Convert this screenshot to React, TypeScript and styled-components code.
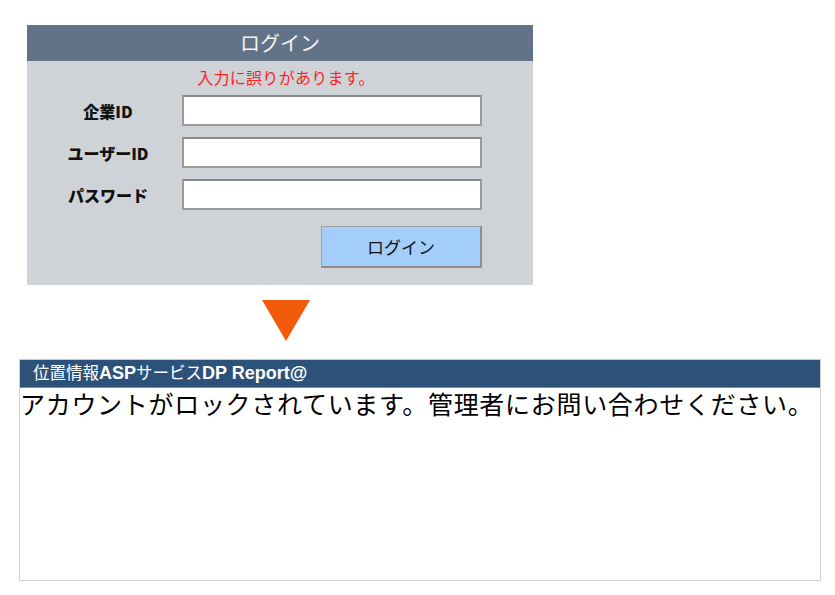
import styled, { createGlobalStyle } from "styled-components";

const GlobalStyle = createGlobalStyle`
    body {
        margin: 0;
        background: #ffffff;
        font-family: "Noto Sans CJK JP", sans-serif;
    }
`;

const StyledPage = styled.div`
    display: flex;
    flex-direction: column;
    align-items: flex-start;
    width: 835px;
    height: 595px;
    overflow: hidden;
`;

const StyledLoginPanel = styled.section`
    margin: 25px 0 0 27px;
    width: 506px;
    height: 260px;
    background: #cfd2d6;
    display: flex;
    flex-direction: column;
`;

const StyledLoginHeader = styled.h1`
    margin: 0;
    height: 36px;
    background: #627388;
    color: #f4f4f4;
    font-size: 20px;
    font-weight: 400;
    line-height: 36px;
    text-align: center;
`;

const StyledError = styled.p`
    margin: 5px 0 7px;
    padding-left: 12px;
    height: 22px;
    line-height: 22px;
    text-align: center;
    color: #ff1f1f;
    font-size: 16px;
    letter-spacing: 0.3px;
`;

const StyledForm = styled.div`
    display: grid;
    grid-template-columns: 106px 300px;
    column-gap: 21px;
    row-gap: 11px;
    padding-left: 28px;
    align-items: center;
`;

const StyledLabel = styled.label`
    text-align: center;
    font-size: 16px;
    font-weight: 900;
    color: #111;
`;

const StyledInput = styled.input`
    box-sizing: border-box;
    width: 300px;
    height: 31px;
    border: 2px solid #9a9a9a;
    border-top-color: #8a8a8a;
    background: #ffffff;
    padding: 0 6px;
    margin: 0;
`;

const StyledButton = styled.button`
    grid-column: 2;
    justify-self: end;
    margin-top: 5px;
    box-sizing: border-box;
    width: 161px;
    height: 42px;
    background: #a3cdfb;
    border: 1px solid #a0a0a0;
    border-right: 2px solid #8e8e8e;
    border-bottom: 2px solid #8e8e8e;
    font-family: "Noto Sans CJK JP", sans-serif;
    font-size: 17px;
    color: #111;
    cursor: pointer;
`;

const StyledArrow = styled.div`
    margin: 15px 0 0 262px;
    width: 0;
    height: 0;
    border-left: 24px solid transparent;
    border-right: 24px solid transparent;
    border-top: 41px solid #f05a0a;
`;

const StyledResultPanel = styled.section`
    margin: 18px 0 0 19px;
    box-sizing: border-box;
    width: 802px;
    height: 222px;
    border: 1px solid #cfcfcf;
    border-top-color: #c8c8c8;
`;

const StyledResultHeader = styled.div`
    height: 28px;
    line-height: 26px;
    background: #2d5279;
    color: #ffffff;
    padding-left: 13px;
    font-family: "Liberation Sans", "Noto Sans CJK JP", sans-serif;
    font-size: 16.5px;
    border-bottom: 1px solid #6f8fb0;
    box-sizing: border-box;
    white-space: nowrap;
`;

const StyledStrong = styled.b`
    font-weight: 700;
    font-size: 18px;
`;

const StyledMessage = styled.p`
    margin: 0;
    font-size: 25px;
    line-height: 30px;
    letter-spacing: 0.7px;
    color: #000;
    white-space: nowrap;
`;

const fields = ["企業ID", "ユーザーID", "パスワード"];

export default function App() {
    return (
        <StyledPage>
            <GlobalStyle />
            <StyledLoginPanel>
                <StyledLoginHeader>ログイン</StyledLoginHeader>
                <StyledError>入力に誤りがあります。</StyledError>
                <StyledForm>
                    {fields.map((f) => (
                        <>
                            <StyledLabel key={f + "l"}>{f}</StyledLabel>
                            <StyledInput key={f + "i"} type={f === "パスワード" ? "password" : "text"} />
                        </>
                    ))}
                    <StyledButton>ログイン</StyledButton>
                </StyledForm>
            </StyledLoginPanel>

            <StyledArrow />

            <StyledResultPanel>
                <StyledResultHeader>
                    位置情報<StyledStrong>ASP</StyledStrong>サービス<StyledStrong>DP Report@</StyledStrong>
                </StyledResultHeader>
                <StyledMessage>アカウントがロックされています。管理者にお問い合わせください。</StyledMessage>
            </StyledResultPanel>
        </StyledPage>
    )
}
